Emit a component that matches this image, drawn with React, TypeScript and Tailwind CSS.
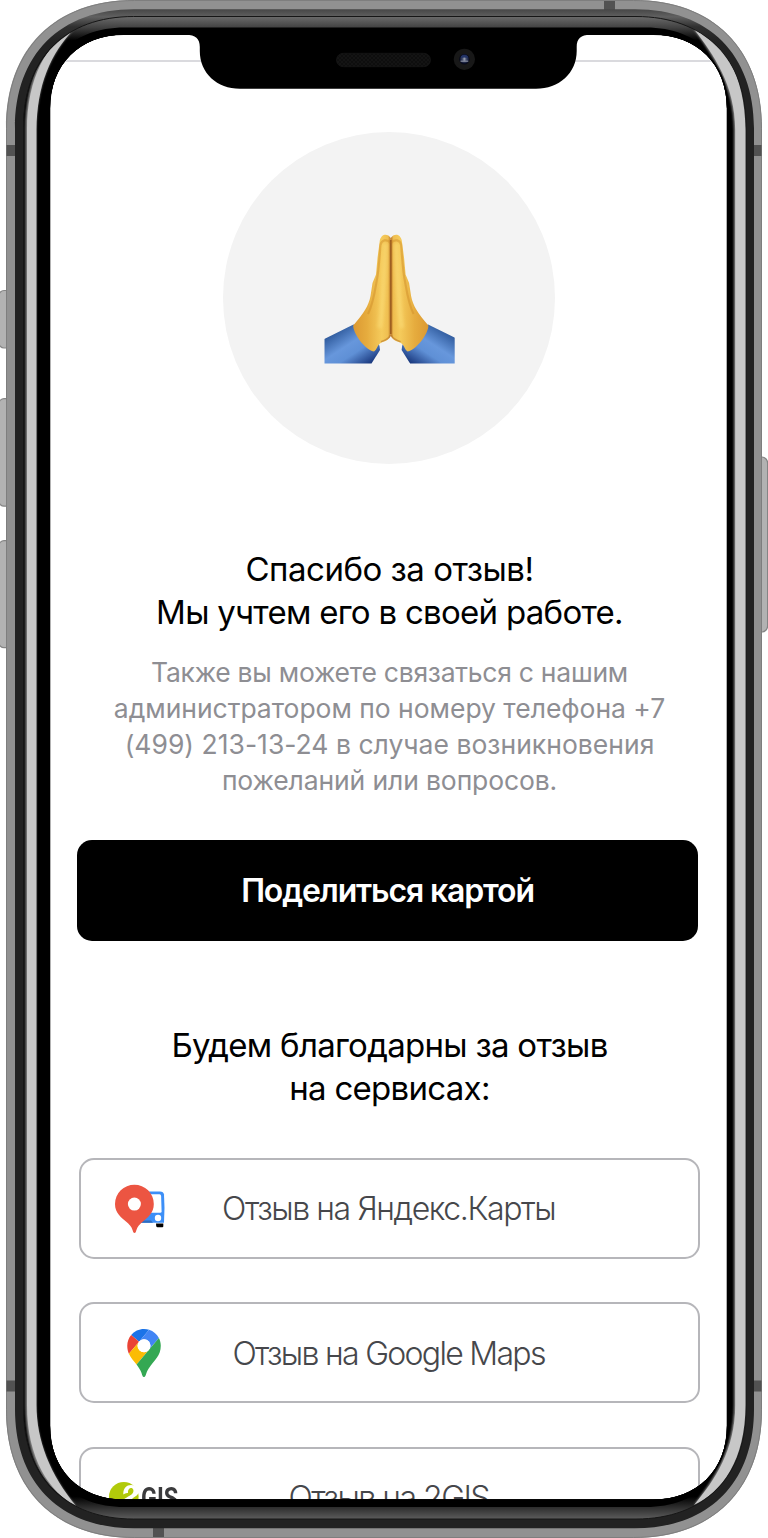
import React from "react";

function rr(x0: number, y0: number, x1: number, y1: number, r: number, k = 0.4): string {
  const c = r * k;
  return `M${x0 + r} ${y0}H${x1 - r}C${x1 - c} ${y0} ${x1} ${y0 + c} ${x1} ${y0 + r}V${y1 - r}C${x1} ${y1 - c} ${x1 - c} ${y1} ${x1 - r} ${y1}H${x0 + r}C${x0 + c} ${y1} ${x0} ${y1 - c} ${x0} ${y1 - r}V${y0 + r}C${x0} ${y0 + c} ${x0 + c} ${y0} ${x0 + r} ${y0}Z`;
}

const screenPath = rr(50, 34.7, 727, 1499.6, 74, 0.4);

function PhoneFrame() {
  return (
    <svg className="pointer-events-none absolute inset-0" width="768" height="1538" viewBox="0 0 768 1538" fill="none" aria-hidden="true">
      <defs>
        <linearGradient id="topDark" x1="0" y1="9" x2="0" y2="120" gradientUnits="userSpaceOnUse">
          <stop offset="0" stopColor="#454545" />
          <stop offset="0.07" stopColor="#606060" />
          <stop offset="0.16" stopColor="#303030" />
          <stop offset="0.3" stopColor="#222" />
          <stop offset="1" stopColor="#222" />
        </linearGradient>
        <linearGradient id="bezel" x1="0" y1="16.5" x2="0" y2="1519" gradientUnits="userSpaceOnUse">
          <stop offset="0" stopColor="#6b6b6b" />
          <stop offset="0.0073" stopColor="#424242" />
          <stop offset="0.016" stopColor="#000" />
          <stop offset="0.985" stopColor="#000" />
          <stop offset="0.992" stopColor="#2c2c2c" />
          <stop offset="1" stopColor="#5c5c5c" />
        </linearGradient>
        <filter id="soft" x="-20%" y="-5%" width="140%" height="110%">
          <feGaussianBlur stdDeviation="0.9" />
        </filter>
        <radialGradient id="lens" cx="0.5" cy="0.5" r="0.5">
          <stop offset="0" stopColor="#7d869b" />
          <stop offset="0.5" stopColor="#3b4563" />
          <stop offset="1" stopColor="#0c1230" />
        </radialGradient>
        <pattern id="mesh" width="4" height="4" patternUnits="userSpaceOnUse">
          <rect width="4" height="4" fill="#0e0e0e" />
          <path d="M0 0l4 4M4 0L0 4" stroke="#151515" strokeWidth="0.8" />
        </pattern>
        <clipPath id="bezelClip">
          <path d={rr(24, 17, 746, 1518.5, 110, 0.38)} />
        </clipPath>
      </defs>

      <g fill="#b2b2b2" stroke="#858585" strokeWidth="1.2">
        <rect x="-1" y="290.5" width="13" height="57.5" rx="5" />
        <rect x="-1" y="398.7" width="13" height="107.5" rx="5" />
        <rect x="-1" y="540.7" width="13" height="107" rx="5" />
        <rect x="752" y="457" width="15.6" height="175" rx="6" />
      </g>

      <path fillRule="evenodd" fill="#919191" d={rr(6, 0, 762, 1538, 128, 0.38) + screenPath} />
      <path stroke="#7e7e7e" strokeWidth="1" d={rr(6.5, 0.5, 761.5, 1537.5, 128, 0.38)} />
      <g fill="#525252">
        <rect x="604" y="1" width="11" height="9" />
        <rect x="153" y="1528" width="11" height="9" />
        <rect x="6.5" y="145" width="9" height="11" />
        <rect x="753" y="145" width="8.5" height="11" />
        <rect x="6.5" y="1380.5" width="9" height="11" />
        <rect x="753" y="1380.5" width="8.5" height="11" />
      </g>
      <path fillRule="evenodd" fill="url(#topDark)" d={rr(15, 9.3, 754, 1528.3, 119, 0.38) + screenPath} />
      <path fillRule="evenodd" fill="url(#bezel)" d={rr(23.5, 16.5, 746, 1519, 110, 0.38) + screenPath} />
      <path fillRule="evenodd" fill="#000" d={rr(36.5, 27.5, 734, 1507, 88, 0.4) + screenPath} />
      <path stroke="#161616" strokeWidth="1" d={rr(23.5, 16.5, 746, 1519, 110, 0.38)} />

      <g clipPath="url(#bezelClip)">
        <g filter="url(#soft)" fill="#8c8c8c">
          <path d="M74 29C46 41 25.500 76 25.500 130V1405C25.500 1460 47 1493 76 1506C50 1475 36 1440 36 1405V130C37 85 50 54 74 29Z" />
          <path d="M693 28C712 55 734 85 734 130V1405C734 1450 713 1480 694 1505C722 1492 745 1460 745 1405V130C745 75 722 38 693 28Z" />
        </g>
        <g fill="#c7c7c7">
          <path d="M75 28C47 42 27 78 27 130V1405C27 1458 49 1492 77 1507C50 1475 36.500 1440 36.500 1405V130C37 85 50 54 75 28Z" />
          <path d="M693 28C714 55 735.200 85 735.200 130V1405C735.200 1450 715 1480 694 1505C722 1492 745.500 1460 745.500 1405V130C745.500 75 722 38 693 28Z" />
        </g>
      </g>
      <path stroke="#000" strokeWidth="1.4" d={rr(49.6, 34.3, 727.4, 1500, 74, 0.4)} />
      <path
        fill="#000"
        d="M186 33V34.7C195.5 34.7 199.8 38.5 199.8 47V51C199.8 73 217 88.8 240 88.8H536C559 88.8 576.7 73 576.7 51V47C576.7 38.5 581 34.7 590 34.7V33Z"
      />
      <rect x="336.5" y="53.3" width="94" height="13.4" rx="6.7" fill="url(#mesh)" stroke="#171717" strokeWidth="0.7" />
      <circle cx="464.4" cy="59.3" r="10.6" fill="#181818" />
      <circle cx="464.4" cy="59.3" r="5.3" fill="#080a18" />
      <circle cx="464.4" cy="58.9" r="4.6" fill="url(#lens)" />
      <path d="M461 56.2q3.400-2.200 6.800 0v1.600h-6.800Z" fill="#233468" />
      <path d="M463.500 57.500h1.800v3h3v1.600h-7.800v-1.600h3Z" fill="#aeb3c0" opacity="0.55" />
    </svg>
  );
}

function HandHalf() {
  return (
    <g>
      <path d="M14.300 119 43.500 104.500C52 108 67 118 69.500 126L70 130 61.500 143.400H14.300Z" fill="url(#hand-sleeve)" />
      <path
        d="M80.800 18C78 13.500 71.500 13 69.800 20.500L67.500 38 66 54.500 62.500 63 60.500 76C58.500 86 54 93 43.200 105.500C43 112 53 128.500 64 131.600C67.500 129 67 125 71.500 122.500C75 121.500 79.500 119.500 80.800 115.500Z"
        fill="url(#hand-skin)"
      />
      <path d="M80.500 23C77 18.500 71.500 20 70.500 25C69.500 36 69 50 66.500 62C64.500 74 63 84 58 94" stroke="#d1902c" strokeWidth="2.200" opacity="0.5" fill="none" filter="url(#handBlur)" />
      <path d="M75.500 25C74.500 50 74 76 70 106" stroke="#fbdc77" strokeWidth="5" strokeLinecap="round" opacity="0.55" fill="none" filter="url(#handBlur2)" />
      <path d="M80.600 20V114" stroke="#95551a" strokeWidth="1.400" opacity="0.7" fill="none" filter="url(#handBlur)" />
      <path d="M80.400 115C79 118.500 75 120.500 71 121.800" stroke="#b9782a" strokeWidth="1.600" opacity="0.6" fill="none" filter="url(#handBlur)" />
    </g>
  );
}

function PrayingHands() {
  return (
    <svg width="160" height="160" viewBox="0 0 160 160" fill="none" aria-hidden="true">
      <defs>
        <linearGradient id="hand-skin" x1="44" y1="74" x2="81" y2="74" gradientUnits="userSpaceOnUse">
          <stop offset="0" stopColor="#dc9a33" />
          <stop offset="0.35" stopColor="#e6ac3e" />
          <stop offset="0.75" stopColor="#f5cb5c" />
          <stop offset="0.92" stopColor="#efbe50" />
          <stop offset="1" stopColor="#b97324" />
        </linearGradient>
        <linearGradient id="hand-sleeve" x1="32" y1="106" x2="58" y2="146" gradientUnits="userSpaceOnUse">
          <stop offset="0" stopColor="#2c5799" />
          <stop offset="0.4" stopColor="#6797dc" />
          <stop offset="0.62" stopColor="#5f90d6" />
          <stop offset="1" stopColor="#16347a" />
        </linearGradient>
        <filter id="handBlur" x="-50" y="0" width="260" height="160" filterUnits="userSpaceOnUse">
          <feGaussianBlur stdDeviation="0.7" />
        </filter>
        <filter id="handBlur2" x="-50" y="0" width="260" height="160" filterUnits="userSpaceOnUse">
          <feGaussianBlur stdDeviation="1.8" />
        </filter>
        <clipPath id="handClip">
          <rect x="14.300" y="0" width="130.400" height="160" />
        </clipPath>
      </defs>
      <g clipPath="url(#handClip)">
        <HandHalf />
        <g transform="matrix(-1 0 0 1 161.600 0)">
          <HandHalf />
        </g>
      </g>
    </svg>
  );
}

function YandexIcon() {
  return (
    <svg className="mr-[8px] mt-[2px]" width="50" height="50" viewBox="0 0 50 50" aria-hidden="true">
      <path d="M28 7.500H45Q48.500 7.500 49 10.500Q50 24 49 38.800H22Z" fill="#3d8ff7" />
      <path d="M34 10.200H44.500Q46 10.200 46.100 12L46.600 27.500Q46.600 28.800 45.200 28.800H32Z" fill="#fff" />
      <circle cx="43" cy="34" r="3.200" fill="#fff" />
      <path d="M27 36.500H36L38 38.800H25Z" fill="#2f6dbf" />
      <path d="M41 39.400H48.300V42.300Q48.300 43.300 47.300 43.300H42.600Q41.400 43.300 41.200 42Z" fill="#000" />
      <path d="M19.400.700A19.400 19.400 0 0 1 38.800 20C38.800 29 33 33.500 26 39.200C22.500 42.200 21.500 45.500 20.700 48.200Q19.500 49.700 18.300 48.200C17.400 45 16.200 42 13 39.200C6 33.500 0 29 0 20A19.400 19.400 0 0 1 19.400.700Z" fill="#ec5542" />
      <circle cx="19.400" cy="20.100" r="6.500" fill="#fff" />
    </svg>
  );
}

function GoogleMapsIcon() {
  return (
    <svg width="34" height="48" viewBox="0 0 92.300 132.300" aria-hidden="true">
      <path fill="#1a73e8" d="M60.200 2.200C55.800.8 51 0 46.100 0 32 0 19.300 6.400 10.800 16.500l21.800 18.300L60.200 2.200z" />
      <path fill="#ea4335" d="M10.800 16.500C4.100 24.500 0 34.900 0 46.100c0 8.700 1.700 15.700 4.600 22l28-33.300-21.800-18.300z" />
      <path fill="#4285f4" d="M46.200 28.500c9.800 0 17.700 7.900 17.700 17.700 0 4.300-1.600 8.300-4.200 11.400 0 0 13.900-16.600 27.500-32.700-5.600-10.800-15.300-19-27-22.700L32.600 34.800c3.300-3.800 8.100-6.300 13.600-6.300" />
      <path fill="#fbbc04" d="M46.200 63.800c-9.800 0-17.700-7.900-17.700-17.700 0-4.300 1.500-8.300 4.100-11.300l-28 33.300c4.800 10.600 12.800 19.200 21 29.900l34.100-40.500c-3.300 3.900-8.100 6.300-13.500 6.300" />
      <path fill="#34a853" d="M59.100 109.200c15.400-24.100 33.300-35 33.300-63 0-7.700-1.900-14.900-5.200-21.300L25.600 98c2.600 3.400 5.300 7.300 7.900 11.300 9.400 14.500 6.800 23.100 12.800 23.100s3.400-8.700 12.800-23.200" />
      <circle cx="46.200" cy="46.200" r="17.700" fill="#fff" />
    </svg>
  );
}

function TwoGisIcon() {
  return (
    <svg width="30" height="30" viewBox="0 0 30 30" aria-hidden="true">
      <circle cx="14.800" cy="14.800" r="14.800" fill="#b1ca0a" />
      <path
        d="M14.300 12.500C14 6.500 17.500 3 22 3C25.500 3 28 5 29.500 8L30 10.500C28.500 13 26.500 14.500 24 16L20 20H30V22.500H12C12.500 17.500 17 16 21 13.500C24.800 11 25.200 8 23.500 6.500C21 5 18.500 7.500 19 11Q16.500 10.500 14.300 12.500Z"
        fill="#fff"
      />
    </svg>
  );
}

function ReviewCard({ icon, label, className }: { icon: React.ReactNode; label: string; className: string }) {
  return (
    <button className="flex h-[101px] w-[621px] shrink-0 items-center rounded-[15px] border-2 border-[#b6b6ba] bg-white">
      <span className="flex h-full w-[126px] shrink-0 items-center justify-center">{icon}</span>
      <span className={"whitespace-nowrap pt-[2px] text-left text-[32px] font-light text-[#46474b] " + className}>{label}</span>
    </button>
  );
}

export default function App() {
  return (
    <main className="relative h-[1538px] w-[768px] overflow-hidden bg-white font-['Inter',sans-serif]">
      <section className="flex h-[1500px] flex-col items-center overflow-hidden pl-[10px]">
        <div className="mt-[60px] h-[2px] w-[660px] shrink-0 bg-[#dadade]" />
        <div className="mt-[70px] flex size-[332px] shrink-0 items-center justify-center rounded-full bg-[#f3f3f3] pl-[2px] pt-[4px]">
          <PrayingHands />
        </div>

        <h1 className="mt-[84px] shrink-0 pl-[1px] text-center text-[33px] leading-[43.400px] text-black">
          <span className="tracking-[-0.500px]">Спасибо за отзыв!</span>
          <br />
          <span className="tracking-[-0.720px]">Мы учтем его в своей работе.</span>
        </h1>
        <p className="mt-[19px] shrink-0 whitespace-nowrap pl-[1px] text-center text-[26.500px] leading-[36px] text-[#8e8e93]">
          <span className="tracking-[-0.260px]">Также вы можете связаться с нашим</span>
          <br />
          <span className="tracking-[-0.030px]">администратором по номеру телефона +7</span>
          <br />
          <span className="tracking-[0.020px]">(499) 213-13-24 в случае возникновения</span>
          <br />
          <span className="tracking-[-0.120px]">пожеланий или вопросов.</span>
        </p>

        <button className="mr-[3px] mt-[42px] h-[101px] w-[621px] shrink-0 rounded-[15px] bg-black pt-[2px] text-[32px] font-semibold tracking-[-1.150px] text-white">
          Поделиться картой
        </button>

        <h2 className="mt-[83px] shrink-0 pl-[1px] text-center text-[33px] leading-[43.400px] text-black">
          <span className="tracking-[-0.720px]">Будем благодарны за отзыв</span>
          <br />
          <span className="tracking-[-0.720px]">на сервисах:</span>
        </h2>

        <div className="mt-[47px] flex shrink-0 flex-col gap-[43.500px]">
          <ReviewCard icon={<YandexIcon />} label="Отзыв на Яндекс.Карты" className="pl-[15.500px] tracking-[-1.400px]" />
          <ReviewCard icon={<GoogleMapsIcon />} label="Отзыв на Google Maps" className="pl-[26px] tracking-[-1.700px]" />
          <ReviewCard
            icon={
              <span className="flex items-center gap-[2px]">
                <TwoGisIcon />
                <span className="w-[37px] text-left">
                  <span className="inline-block origin-left scale-x-[0.78] font-['Roboto',sans-serif] text-[30px] font-bold text-[#3b3b3d]">GIS</span>
                </span>
              </span>
            }
            label="Отзыв на 2GIS"
            className="pl-[82px] tracking-[-1.500px]"
          />
        </div>
      </section>
      <PhoneFrame />
    </main>
  );
}
